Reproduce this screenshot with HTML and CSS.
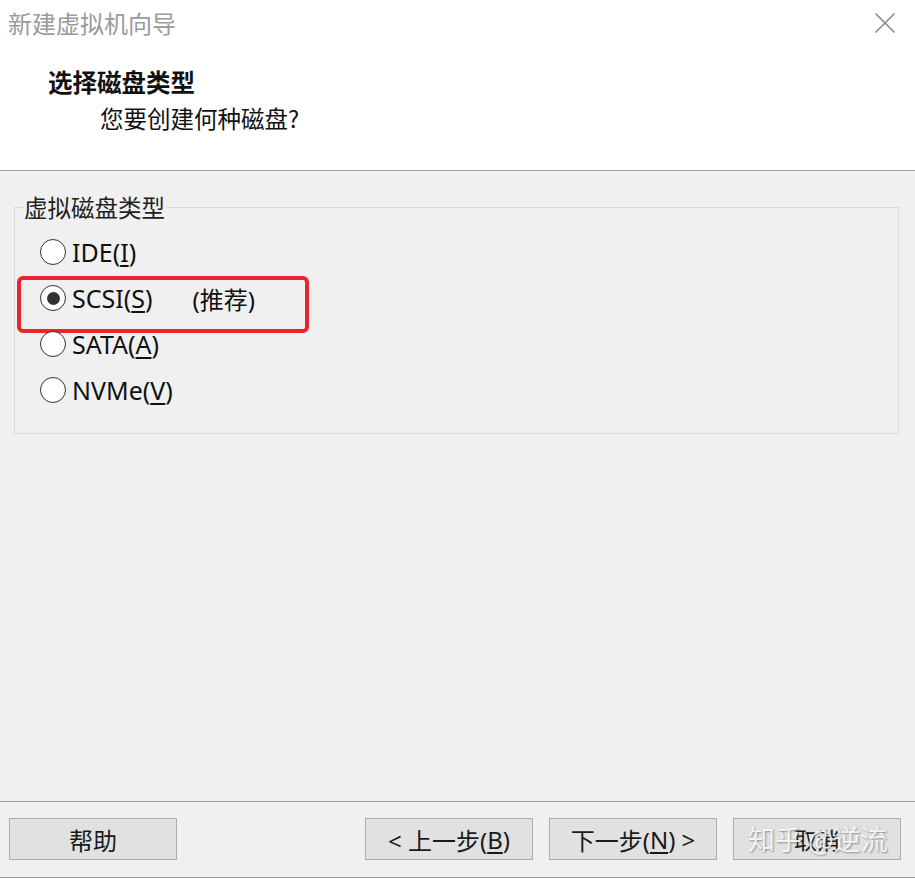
FILE: index.html
```html
<!DOCTYPE html>
<html lang="zh-CN">
<head>
<meta charset="utf-8">
<title>新建虚拟机向导</title>
<link rel="stylesheet" href="styles.css">
</head>
<body>
<div class="window">
  <header class="header">
    <div class="titlebar">
      <span class="title">新建虚拟机向导</span>
      <span class="close" aria-label="关闭">
        <svg width="22" height="22" viewBox="0 0 22 22"><path d="M1.5 1.5 L20.5 20.5 M20.5 1.5 L1.5 20.5" stroke="#8a8a8a" stroke-width="1.6" fill="none"/></svg>
      </span>
    </div>
    <h1 class="heading">选择磁盘类型</h1>
    <p class="subtitle">您要创建何种磁盘?</p>
  </header>
  <main class="main">
    <fieldset class="group">
      <legend class="legend">虚拟磁盘类型</legend>
      <div class="option"><span class="radio"></span><span class="label">IDE(<u>I</u>)</span></div>
      <div class="option"><span class="radio checked"></span><span class="label">SCSI(<u>S</u>)</span><span class="rec">(推荐)</span><span class="mark"></span></div>
      <div class="option"><span class="radio"></span><span class="label">SATA(<u>A</u>)</span></div>
      <div class="option"><span class="radio"></span><span class="label">NVMe(<u>V</u>)</span></div>
    </fieldset>
  </main>
  <footer class="footer">
    <button class="btn">帮助</button>
    <div class="spacer"></div>
    <button class="btn">&lt; 上一步(<u>B</u>)</button>
    <button class="btn">下一步(<u>N</u>) &gt;</button>
    <button class="btn cancel"><span class="cancel-text">取消</span><span class="watermark">知乎 @逆流</span></button>
  </footer>
</div>
</body>
</html>
```

FILE: styles.css
```css
* { box-sizing: border-box; }
html, body { margin: 0; padding: 0; }
body {
  width: 915px;
  height: 878px;
  background: #f0f0f0;
  font-family: "Noto Sans", "Noto Sans CJK SC", sans-serif;
  color: #1a1a1a;
  overflow: hidden;
}
.window {
  display: flex;
  flex-direction: column;
  height: 878px;
}
.header {
  background: #ffffff;
  height: 171px;
  border-bottom: 1px solid #a0a0a0;
  display: flex;
  flex-direction: column;
}
.titlebar {
  height: 46px;
  display: flex;
  align-items: center;
  justify-content: space-between;
  padding: 0 19px 0 8px;
}
.title {
  font-size: 24px;
  color: #9a9a9a;
  font-family: "Noto Sans CJK SC", sans-serif;
  line-height: 46px;
}
.close { display: flex; width: 22px; height: 22px; }
.heading {
  margin: 21px 0 0 48px;
  font-size: 24.5px;
  font-weight: bold;
  line-height: 30px;
  color: #111;
  font-family: "Noto Sans CJK SC", sans-serif;
}
.subtitle {
  margin: 6px 0 0 100px;
  font-size: 23.5px;
  line-height: 30px;
  color: #111;
  font-family: "Noto Sans CJK SC", sans-serif;
}
.main {
  flex: 1;
  padding: 24px 16px 0 14px;
}
.group {
  position: relative;
  margin: 0;
  width: 885px;
  border: 1px solid #dadada;
  padding: 10px 0 20px 25px;
}
.legend {
  margin-left: -17px;
  padding: 0 1px;
  font-size: 23.5px;
  line-height: 24px;
  color: #222;
  font-family: "Noto Sans CJK SC", sans-serif;
}
.option {
  position: relative;
  height: 46px;
  display: flex;
  align-items: center;
  font-size: 25px;
  color: #111;
}
.radio {
  width: 26px;
  height: 26px;
  border: 1.6px solid #333;
  border-radius: 50%;
  background: #fff;
  display: flex;
  align-items: center;
  justify-content: center;
  flex: none;
}
.radio.checked::after {
  content: "";
  width: 13px;
  height: 13px;
  border-radius: 50%;
  background: #333;
}
.label { margin-left: 6px; }
u { text-underline-offset: 3px; text-decoration-thickness: 1.5px; }
.rec { margin-left: 40px; font-family: "Noto Sans", "Noto Sans CJK SC", sans-serif; font-size: 24px; }
.mark {
  position: absolute;
  left: -23px;
  top: 1px;
  width: 292px;
  height: 57px;
  border: 4px solid #e8262b;
  border-radius: 6px;
}
.footer {
  height: 77px;
  border-top: 1px solid #a0a0a0;
  border-bottom: 1px solid #a0a0a0;
  display: flex;
  align-items: flex-start;
  padding: 16px 14px 0 9px;
  gap: 16px;
}
.spacer { flex: 1; }
.btn {
  position: relative;
  width: 168px;
  height: 42px;
  background: #e1e1e1;
  border: 1px solid #adadad;
  font-family: "Noto Sans", "Noto Sans CJK SC", sans-serif;
  font-size: 24px;
  color: #1a1a1a;
  padding: 0;
  display: flex;
  align-items: center;
  justify-content: center;
}
.cancel-text { font-size: 23px; }
.watermark {
  position: absolute;
  left: 14px;
  top: 3px;
  font-family: "Noto Sans CJK SC", sans-serif;
  font-size: 27px;
  line-height: 34px;
  color: rgba(255,255,255,0.85);
  text-shadow: 1px 1px 2px rgba(90,90,90,0.6);
  white-space: nowrap;
}
```
